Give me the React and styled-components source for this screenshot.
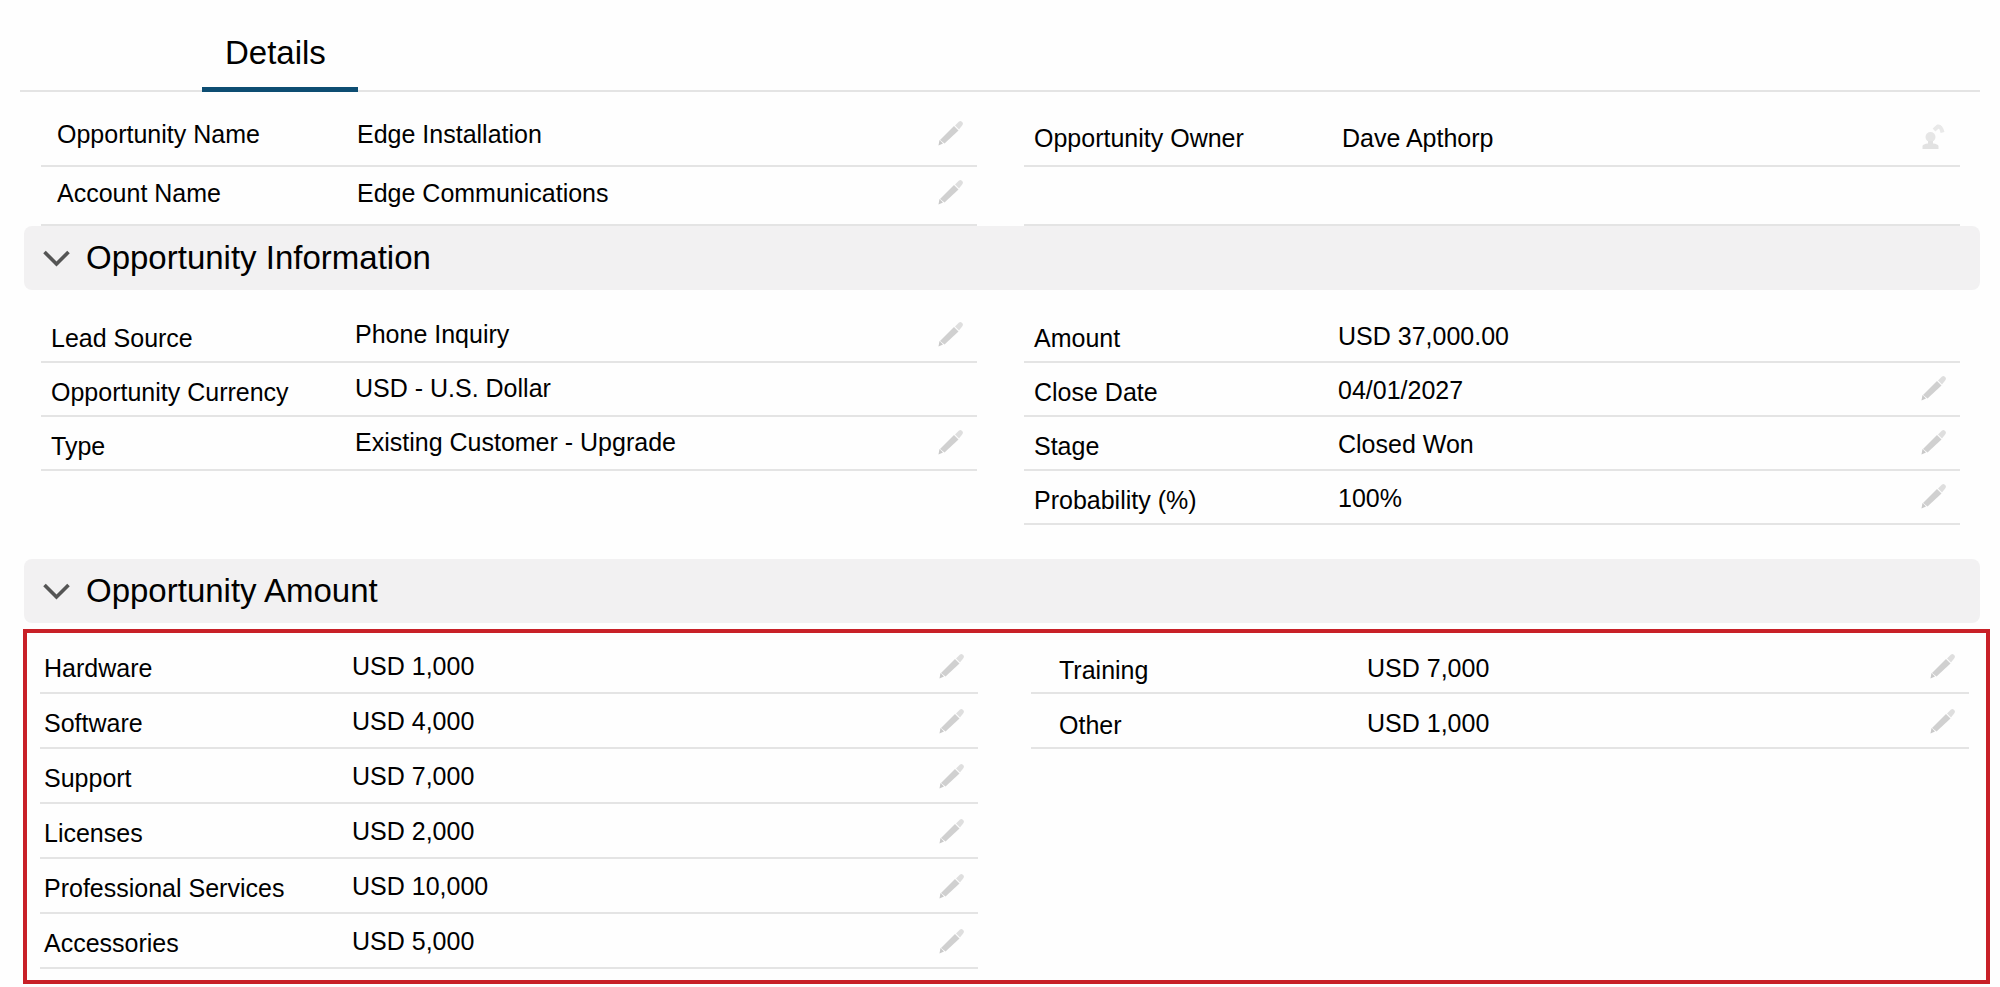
import React, { useState } from "react";
import styled, { createGlobalStyle } from "styled-components";

const GlobalStyle = createGlobalStyle`
  *, *::before, *::after { box-sizing: border-box; }
  body {
    margin: 0;
    background: #fefefe;
    color: #000;
    font-family: "Liberation Sans", Arial, sans-serif;
    font-size: 25px;
    line-height: 28px;
  }
  button { font: inherit; color: inherit; background: none; border: 0; padding: 0; cursor: pointer; }
  dl, dt, dd, h2 { margin: 0; }
`;

const Page = styled.main`
  padding: 0 20px;
`;

const TabBar = styled.nav`
  display: flex;
  height: 92px;
  padding-left: 182px;
  box-shadow: inset 0 -2px #e4e4e4;
`;

const Tab = styled.button`
  width: 156px;
  padding: 18px 0 0 23px;
  font-size: 33px;
  text-align: left;
  border-bottom: 5px solid #0d4d72;
`;

const Columns = styled.div`
  display: grid;
  grid-template-columns: 1fr 1fr;
  column-gap: 47px;
  padding: ${(p) => p.$top || 0}px 20px ${(p) => p.$bottom || 0}px 21px;
`;

const Highlight = styled.div`
  display: grid;
  grid-template-columns: 1fr 1fr;
  column-gap: 53px;
  margin: 6px -10px 0 3px;
  padding: 6px 17px 11px 13px;
  border: 4px solid #c82027;
`;

const SectionHeader = styled.h2`
  margin-left: 4px;
  background: #f2f1f2;
  border-radius: 8px;
  font-size: 33px;
  font-weight: 400;
`;

const Toggle = styled.button`
  display: flex;
  align-items: center;
  gap: 16px;
  width: 100%;
  height: 64px;
  padding-left: 19px;
  text-align: left;
`;

const FieldList = styled.dl`
  min-width: 0;
`;

const Field = styled.div`
  display: flex;
  align-items: flex-end;
  height: ${(p) => p.$height}px;
  padding: 0 13px 0 ${(p) => p.$indent}px;
  border-bottom: 2px solid #e4e4e4;
`;

const Label = styled.dt`
  flex: none;
  width: ${(p) => p.$width}px;
  padding-bottom: ${(p) => p.$base}px;
`;

const Value = styled.dd`
  flex: 1;
  padding-bottom: ${(p) => p.$base}px;
`;

const Action = styled.dd`
  display: flex;
  padding-bottom: ${(p) => p.$base}px;
`;

const IconButton = styled.button`
  width: 26px;
  height: 26px;
  svg { display: block; }
`;

function Chevron({ open }) {
  return (
    <svg width="27" height="17" viewBox="0 0 27 17" fill="none" aria-hidden="true">
      <path
        d={open ? "M1.500 2 13.500 14 25.500 2" : "M1.500 14 13.500 2 25.500 14"}
        stroke="#555"
        strokeWidth="3.6"
      />
    </svg>
  );
}

function Pencil() {
  return (
    <svg width="26" height="26" viewBox="0 0 26 26" aria-hidden="true">
      <path d="M.5 25.500 1.500 20 5 23.500Z" fill="#c9c9c9" />
      <path d="M2 20 16 6 20.500 10.500 6.500 23.500Z" fill="#d0d0d0" />
      <path d="M17 5.500 21 1.500Q22.500 .5 23.500 1.500L24.500 2.500Q25.500 3.500 24.500 5L21 9.500Z" fill="#dedede" />
    </svg>
  );
}

function ChangeOwner() {
  return (
    <svg width="26" height="26" viewBox="0 0 26 26" aria-hidden="true">
      <circle cx="9.5" cy="13" r="5" fill="#e6e6e6" />
      <path d="M1.5 25V22Q2 20 7 19.5V17H12V19.5Q17 20 17.500 22V25Z" fill="#e2e2e2" />
      <path d="M13 6 17 2.500Q20 2 21.500 8.500" fill="none" stroke="#e9e9e9" strokeWidth="4" />
    </svg>
  );
}

function Fields({ items, height, indent, labelWidth, labelBase, valueBase, iconBase }) {
  return (
    <FieldList>
      {items.map(([label, value, action], i) => (
        <Field key={label || i} $height={Array.isArray(height) ? height[i] : height} $indent={indent}>
          {label && <Label $width={labelWidth} $base={labelBase}>{label}</Label>}
          {label && <Value $base={valueBase}>{value}</Value>}
          {action && (
            <Action $base={iconBase}>
              <IconButton type="button" aria-label={`${action === "owner" ? "Change" : "Edit"} ${label}`}>
                {action === "owner" ? <ChangeOwner /> : <Pencil />}
              </IconButton>
            </Action>
          )}
        </Field>
      ))}
    </FieldList>
  );
}

function Section({ title, children }) {
  const [open, setOpen] = useState(true);
  return (
    <section>
      <SectionHeader>
        <Toggle type="button" aria-expanded={open} onClick={() => setOpen(!open)}>
          <Chevron open={open} />
          {title}
        </Toggle>
      </SectionHeader>
      {open && children}
    </section>
  );
}

const summaryLeft = [
  ["Opportunity Name", "Edge Installation", "edit"],
  ["Account Name", "Edge Communications", "edit"],
];
const summaryRight = [["Opportunity Owner", "Dave Apthorp", "owner"], []];
const infoLeft = [
  ["Lead Source", "Phone Inquiry", "edit"],
  ["Opportunity Currency", "USD - U.S. Dollar"],
  ["Type", "Existing Customer - Upgrade", "edit"],
];
const infoRight = [
  ["Amount", "USD 37,000.00"],
  ["Close Date", "04/01/2027", "edit"],
  ["Stage", "Closed Won", "edit"],
  ["Probability (%)", "100%", "edit"],
];
const amountLeft = [
  ["Hardware", "USD 1,000", "edit"],
  ["Software", "USD 4,000", "edit"],
  ["Support", "USD 7,000", "edit"],
  ["Licenses", "USD 2,000", "edit"],
  ["Professional Services", "USD 10,000", "edit"],
  ["Accessories", "USD 5,000", "edit"],
];
const amountRight = [
  ["Training", "USD 7,000", "edit"],
  ["Other", "USD 1,000", "edit"],
];

export default function App() {
  return (
    <>
      <GlobalStyle />
      <Page>
        <TabBar>
          <Tab type="button" aria-current="page">Details</Tab>
        </TabBar>
        <Columns>
          <Fields items={summaryLeft} height={[75, 59]} indent={16} labelWidth={300} labelBase={17} valueBase={17} iconBase={19} />
          <Fields items={summaryRight} height={[75, 59]} indent={10} labelWidth={308} labelBase={13} valueBase={13} iconBase={15} />
        </Columns>
        <Section title="Opportunity Information">
          <Columns $top={19} $bottom={34}>
            <Fields items={infoLeft} height={54} indent={10} labelWidth={304} labelBase={9} valueBase={13} iconBase={14} />
            <Fields items={infoRight} height={54} indent={10} labelWidth={304} labelBase={9} valueBase={11} iconBase={14} />
          </Columns>
        </Section>
        <Section title="Opportunity Amount">
          <Highlight>
            <Fields items={amountLeft} height={55} indent={4} labelWidth={308} labelBase={10} valueBase={12} iconBase={13} />
            <Fields items={amountRight} height={55} indent={28} labelWidth={308} labelBase={8} valueBase={10} iconBase={13} />
          </Highlight>
        </Section>
      </Page>
    </>
  );
}
